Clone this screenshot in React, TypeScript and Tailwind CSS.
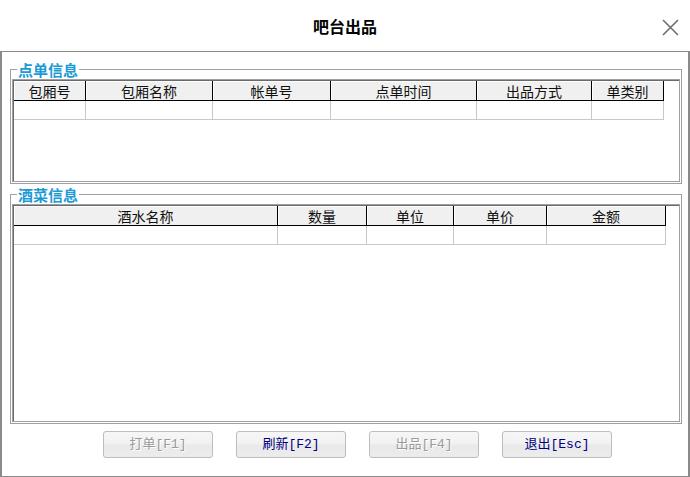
import React from "react";

const cjk = '"Noto Sans CJK SC", "Liberation Sans", sans-serif';
const mono = '"Liberation Mono", "Noto Sans CJK SC", monospace';

type Col = { title: string; w: number };

const orderCols: Col[] = [
  { title: "包厢号", w: 72 },
  { title: "包厢名称", w: 127 },
  { title: "帐单号", w: 118 },
  { title: "点单时间", w: 146 },
  { title: "出品方式", w: 115 },
  { title: "单类别", w: 72 },
];

const itemCols: Col[] = [
  { title: "酒水名称", w: 264 },
  { title: "数量", w: 89 },
  { title: "单位", w: 87 },
  { title: "单价", w: 93 },
  { title: "金额", w: 119 },
];

function Grid({ cols, height }: { cols: Col[]; height: number }) {
  return (
    <div
      className="border border-[#a0a0a0] bg-white"
      style={{ height }}
    >
      <div className="h-full border-l border-t border-[#6a6a6a]">
        {/* header */}
        <div className="flex h-[20px]">
          {cols.map((c) => (
            <div
              key={c.title}
              className="flex shrink-0 items-center justify-center border-b border-r border-black bg-[#f0f0f0] text-[14px] leading-none text-[#111] shadow-[inset_1px_1px_0_#ffffff]"
              style={{ width: c.w }}
            >
              {c.title}
            </div>
          ))}
        </div>
        {/* empty row */}
        <div className="flex h-[19px]">
          {cols.map((c) => (
            <div
              key={c.title}
              className="shrink-0 border-b border-r border-[#c8c8c8]"
              style={{ width: c.w }}
            />
          ))}
        </div>
      </div>
    </div>
  );
}

function Group({
  legend,
  height,
  children,
}: {
  legend: string;
  height: number;
  children: React.ReactNode;
}) {
  return (
    <div
      className="relative ml-[8px] w-[672px] border border-[#a0a0a0] px-[1px] pt-[9px]"
      style={{ height }}
    >
      <span className="absolute left-[6px] top-[-9px] bg-white px-[1px] text-[15px] font-bold leading-[17px] text-[#1b9bd5]">
        {legend}
      </span>
      {children}
    </div>
  );
}

function Btn({ label, disabled }: { label: string; disabled?: boolean }) {
  return (
    <button
      className={`flex h-[27px] w-[110px] items-center justify-center rounded-[3px] border border-[#bdbdbd] bg-[linear-gradient(#f6f6f6_0%,#f2f2f2_45%,#e9e9e9_55%,#ececec_100%)] text-[13px] leading-none ${
        disabled
          ? "text-[#9a9a9a] [text-shadow:1px_1px_0_#ffffff]"
          : "text-[#000080]"
      }`}
      style={{ fontFamily: mono }}
    >
      {label}
    </button>
  );
}

export default function App() {
  return (
    <div
      className="flex h-[477px] w-[690px] flex-col bg-white"
      style={{ fontFamily: cjk }}
    >
      {/* Title bar */}
      <div className="relative flex h-[51px] shrink-0 items-center justify-center">
        <span className="text-[16px] font-bold text-black">吧台出品</span>
        <svg
          className="absolute right-[11px] top-[19px]"
          width="17"
          height="17"
          viewBox="0 0 17 17"
        >
          <path
            d="M1 1 L16 16 M16 1 L1 16"
            stroke="#6e6e6e"
            strokeWidth="1.6"
            fill="none"
          />
        </svg>
      </div>

      {/* Body */}
      <div className="flex flex-1 flex-col border-x-2 border-b border-t border-[#8a8a8a] pt-[17px]">
        <Group legend="点单信息" height={115}>
          <Grid cols={orderCols} height={103} />
        </Group>

        <div className="mt-[10px]">
          <Group legend="酒菜信息" height={230}>
            <Grid cols={itemCols} height={218} />
          </Group>
        </div>

        <div className="ml-[101px] mt-[7px] flex gap-[23px]">
          <Btn label="打单[F1]" disabled />
          <Btn label="刷新[F2]" />
          <Btn label="出品[F4]" disabled />
          <Btn label="退出[Esc]" />
        </div>
      </div>
    </div>
  );
}
